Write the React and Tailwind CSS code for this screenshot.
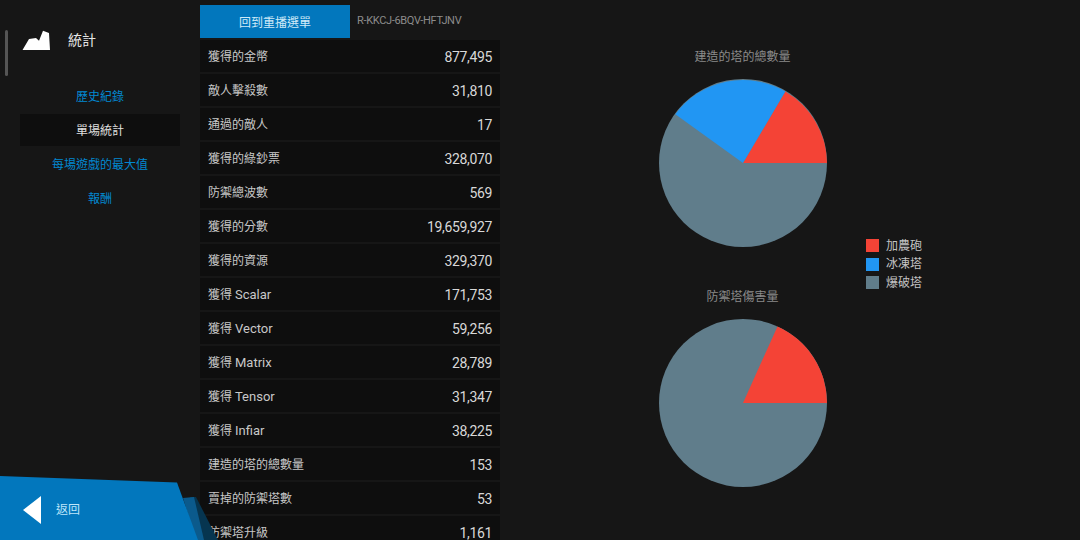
const zh = 'font-["Roboto","Noto_Sans_CJK_TC",sans-serif]'

const rows = [
  ['獲得的金幣', '', '877,495'],
  ['敵人擊殺數', '', '31,810'],
  ['通過的敵人', '', '17'],
  ['獲得的綠鈔票', '', '328,070'],
  ['防禦總波數', '', '569'],
  ['獲得的分數', '', '19,659,927'],
  ['獲得的資源', '', '329,370'],
  ['獲得 ', 'Scalar', '171,753'],
  ['獲得 ', 'Vector', '59,256'],
  ['獲得 ', 'Matrix', '28,789'],
  ['獲得 ', 'Tensor', '31,347'],
  ['獲得 ', 'Infiar', '38,225'],
  ['建造的塔的總數量', '', '153'],
  ['賣掉的防禦塔數', '', '53'],
  ['防禦塔升級', '', '1,161'],
]

const RED = '#f44336'
const BLUE = '#2196f3'
const GRAY = '#607d8b'

function Legend() {
  const items = [['加農砲', 'bg-[#f44336]'], ['冰凍塔', 'bg-[#2196f3]'], ['爆破塔', 'bg-[#607d8b]']]
  return (
    <div className="flex flex-col gap-[5.5px]">
      {items.map(([label, color]) => (
        <div key={label} className="flex items-center gap-[7px] h-[13px]">
          <span className={`w-[13px] h-[13px] ${color}`} />
          <span className="text-[12px] leading-[13px] pt-[1px] text-[#c4c4c4]">{label}</span>
        </div>
      ))}
    </div>
  )
}

function Pie({ title, children }) {
  return (
    <div className="flex flex-col items-center w-[170px] h-[240px]">
      <div className="h-[22px] leading-[22px] text-[12px] text-[#8a8a8a] whitespace-nowrap">{title}</div>
      <svg width="170" height="170" viewBox="-85 -85 170 170" className="mt-[10px]">
        <circle cx="0" cy="0" r="84" fill={GRAY} />
        {children}
      </svg>
    </div>
  )
}

export default function App() {
  return (
    <div className={`relative w-[1080px] h-[540px] overflow-hidden bg-[#161616] flex ${zh}`}>
      {/* sidebar */}
      <div className="w-[200px] shrink-0 flex flex-col">
        <div className="flex items-start h-[46px] mt-[30px] ml-[5px]">
          <div className="w-[3px] h-[46px] bg-[#555555] rounded-sm" />
          <svg width="28" height="20" viewBox="0 0 28 20" className="ml-[14px]">
            <path d="M0.5 20 L7 9 L14 8 L17 10.7 L21 0.7 L27 3 L28 20 Z" fill="#fff" />
          </svg>
          <span className="ml-[18px] mt-[1px] text-[14px] leading-[18px] text-[#e6e6e6]">統計</span>
        </div>
        <div className="mt-[3px] px-[20px] flex flex-col text-[12px]">
          <div className="h-[34px] pt-[2px] flex items-center justify-center text-[#0288d1]">歷史紀錄</div>
          <div className="h-[32px] my-[1px] pt-[2px] flex items-center justify-center bg-[#0e0e0e] text-[#e0e0e0]">單場統計</div>
          <div className="h-[34px] pt-[2px] flex items-center justify-center text-[#0288d1]">每場遊戲的最大值</div>
          <div className="h-[34px] pt-[2px] flex items-center justify-center text-[#0288d1]">報酬</div>
        </div>
      </div>

      {/* stats table */}
      <div className="w-[300px] shrink-0 flex flex-col">
        <div className="flex h-[33px] mt-[5px] mb-[2px] shrink-0">
          <div className="w-[150px] pt-[2px] bg-[#0277bd] flex items-center justify-center text-[12px] text-[#cfeaf8]">回到重播選單</div>
          <div className="ml-[7px] flex items-center text-[11px] tracking-[-0.33px] text-[#8c8c8c]">R-KKCJ-6BQV-HFTJNV</div>
        </div>
        <div className="flex flex-col gap-[2px]">
          {rows.map(([label, latin, value]) => (
            <div key={value} className="h-[32px] shrink-0 pt-[2px] bg-[#0e0e0e] flex items-center justify-between px-[8px]">
              <span className="text-[12px] text-[#c8c8c8]">
                {label}
                {latin && <span className="text-[13px]">{latin}</span>}
              </span>
              <span className="text-[14px] tracking-[-0.35px] text-[#d8d8d8]">{value}</span>
            </div>
          ))}
        </div>
      </div>

      {/* charts */}
      <div className="flex-1 flex">
        <div className="ml-[157.5px] mt-[46px] flex flex-col">
          <Pie title="建造的塔的總數量">
            <path d="M0 0 L84 0 A84 84 0 0 0 42.3 -71.5 Z" fill={RED} />
            <path d="M0 0 L42.3 -71.5 A84 84 0 0 0 -67.7 -48.7 Z" fill={BLUE} />
          </Pie>
          <Pie title="防禦塔傷害量">
            <path d="M0 0 L84 0 A84 84 0 0 0 34.5 -76.6 Z" fill={RED} />
          </Pie>
        </div>
        <div className="ml-[38.5px] mt-[239px]">
          <Legend />
        </div>
      </div>

      {/* back button */}
      <div className="absolute left-0 bottom-0 w-[230px] h-[65px]">
        <svg width="230" height="65" viewBox="0 0 230 65" className="absolute inset-0">
          <path d="M190 22 L196 22 L218 65 L200 65 Z" fill="#063550" />
          <path d="M183 23 L194 22 L204 65 L196 65 Z" fill="#0b5a8c" />
          <path d="M0 1 L177 7.5 L198 65 L0 65 Z" fill="#0277bd" />
        </svg>
        <svg width="19" height="28" viewBox="0 0 19 28" className="absolute left-[23px] top-[21px]">
          <path d="M18 0 L0 14 L18 28 Z" fill="#fff" />
        </svg>
        <span className="absolute left-[56px] top-[28px] text-[12px] leading-[14px] text-[#bfe6fa]">返回</span>
      </div>
    </div>
  )
}
